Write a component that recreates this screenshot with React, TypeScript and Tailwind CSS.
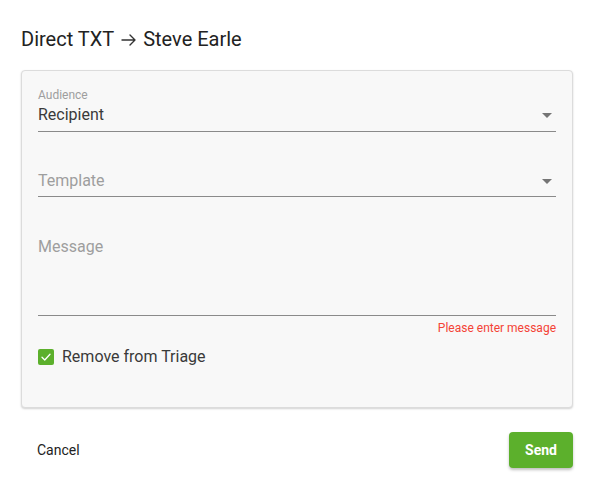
import React from 'react';

const Caret: React.FC = () => (
  <svg width="10" height="5" viewBox="0 0 10 5" className="shrink-0">
    <path d="M0 0 L10 0 L5 5 Z" fill="#757575" />
  </svg>
);

const App: React.FC = () => {
  return (
    <div className="w-[591px] h-[490px] bg-white pl-[21px] pr-[18px] pt-[27px] text-[#212121]" style={{ fontFamily: 'Roboto, "Liberation Sans", sans-serif' }}>
      <h1 className="flex items-center text-[20px] leading-6 font-normal text-[#222]">
        Direct TXT
        <svg width="15" height="12" viewBox="0 0 15 12" className="mx-[7px] mt-[1px]" fill="none" stroke="#333" strokeWidth="1.4" strokeLinecap="round" strokeLinejoin="round">
          <path d="M1 6 H14 M9 1 L14 6 L9 11" />
        </svg>
        Steve Earle
      </h1>

      <div className="mt-[19px] h-[338px] bg-[#f8f8f8] border border-[#dcdcdc] rounded-[4px] shadow-[0_1px_2px_rgba(0,0,0,0.18)] px-4 pt-[17px]">
        <div>
          <div className="text-[12px] leading-[14px] text-[#9e9e9e]">Audience</div>
          <div className="flex items-center justify-between pt-[3px] pb-[6px] border-b border-[#8a8a8a]">
            <span className="text-[16px] leading-[20px] text-[#3a3a3a]">Recipient</span>
            <span className="mr-[4px]"><Caret /></span>
          </div>
        </div>

        <div className="mt-[39px] flex items-center justify-between pb-[5px] border-b border-[#8a8a8a]">
          <span className="text-[16px] leading-[20px] text-[#9e9e9e]">Template</span>
          <span className="mr-[4px]"><Caret /></span>
        </div>

        <div className="mt-[38px] h-[81px] border-b border-[#8a8a8a]">
          <span className="text-[16px] leading-[20px] text-[#9e9e9e]">Message</span>
        </div>
        <div className="mt-[5px] text-right text-[12px] leading-[14px] text-[#f44336]">Please enter message</div>

        <label className="mt-[12px] flex items-center gap-[8px]">
          <span className="w-[16px] h-[16px] rounded-[2px] bg-[#5cb02c] flex items-center justify-center">
            <svg width="12" height="12" viewBox="0 0 24 24" fill="none" stroke="white" strokeWidth="2.6" strokeLinecap="round" strokeLinejoin="round">
              <path d="M4 12.5 L9.5 18 L20 6.5" />
            </svg>
          </span>
          <span className="text-[16px] leading-[20px] text-[#3a3a3a]">Remove from Triage</span>
        </label>
      </div>

      <div className="mt-[24px] flex items-center justify-between">
        <button className="ml-[16px] text-[14px] font-normal text-[#222]">Cancel</button>
        <button className="w-[64px] h-[36px] rounded-[4px] bg-[#5cb02c] text-white text-[14px] font-bold shadow-[0_2px_3px_rgba(0,0,0,0.25)]">Send</button>
      </div>
    </div>
  );
};

export default App;
